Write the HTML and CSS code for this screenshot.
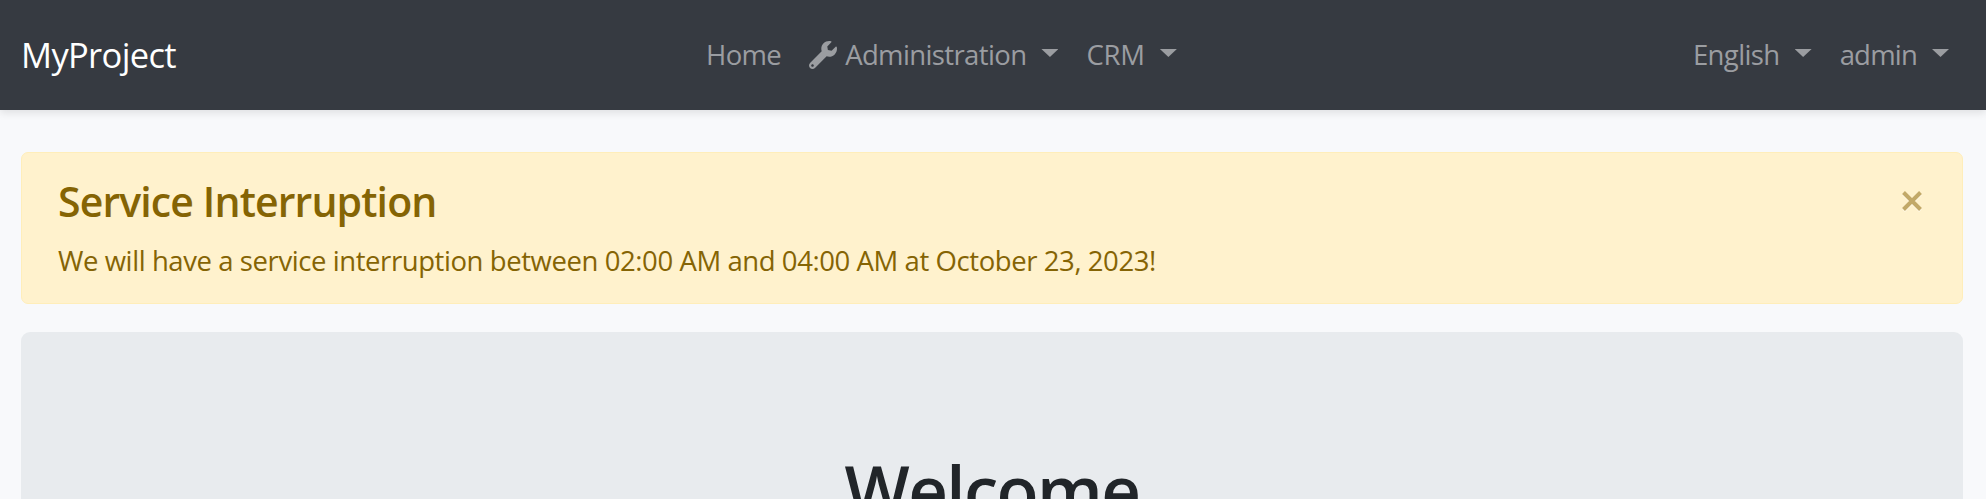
FILE: index.html
```
<!DOCTYPE html>
<html lang="en">
<head>
<meta charset="utf-8">
<title>MyProject</title>
<link rel="stylesheet" href="styles.css">
</head>
<body>
<nav class="navbar">
  <a class="brand">MyProject</a>
  <ul class="nav nav-main">
    <li class="nav-item"><span class="label home">Home</span></li>
    <li class="nav-item">
      <svg class="wrench" viewBox="0 0 512 512" aria-hidden="true"><path fill="currentColor" d="M507.73 109.1c-2.24-9.03-13.54-12.09-20.12-5.51l-74.36 74.36-67.88-11.31-11.31-67.88 74.36-74.36c6.62-6.62 3.43-17.9-5.66-20.16-47.38-11.74-99.55.91-136.58 37.93-39.64 39.64-50.55 97.1-34.05 147.2L18.74 402.76c-24.99 24.99-24.99 65.51 0 90.5 24.99 24.99 65.51 24.99 90.5 0l213.21-213.21c50.12 16.71 107.47 5.68 147.37-34.22 37.07-37.07 49.7-89.32 37.91-136.73zM64 472c-13.25 0-24-10.75-24-24 0-13.26 10.75-24 24-24s24 10.74 24 24c0 13.25-10.75 24-24 24z"/></svg>
      <span class="label administration">Administration</span><span class="caret"></span>
    </li>
    <li class="nav-item"><span class="label crm">CRM</span><span class="caret"></span></li>
  </ul>
  <ul class="nav nav-user">
    <li class="nav-item"><span class="label english">English</span><span class="caret"></span></li>
    <li class="nav-item"><span class="label admin">admin</span><span class="caret"></span></li>
  </ul>
</nav>
<main class="content">
  <section class="alert">
    <div class="alert-body">
      <h4 class="alert-title"><span>Service Interruption</span></h4>
      <p class="alert-text"><span>We will have a service interruption between 02:00 AM and 04:00 AM at October 23, 2023!</span></p>
    </div>
    <svg class="close" viewBox="0 0 20 20" aria-label="Close"><path d="M1.5 2.5 18.5 19.5M18.5 2.5 1.5 19.5" fill="none" stroke="#fff" stroke-opacity=".6" stroke-width="4"/><path d="M1.5 1.5 18.5 18.5M18.5 1.5 1.5 18.5" fill="none" stroke="currentColor" stroke-width="4"/></svg>
  </section>
  <section class="jumbotron"><h1 class="welcome">Welcome</h1></section>
</main>
</body>
</html>
```
FILE: styles.css
```
* { box-sizing: border-box; }
body {
  display: flex;
  flex-direction: column;
  margin: 0;
  height: 499px;
  overflow: hidden;
  background: #f8f9fb;
  color: #212529;
  font: 27.5px/42px "Open Sans", "Noto Sans", sans-serif;
}
.navbar {
  display: grid;
  flex: none;
  grid-template-columns: 685px 1fr auto;
  align-items: center;
  position: relative;
  height: 110px;
  padding: 0 37px 0 21px;
  background: #363a41;
  box-shadow: 0 3px 8px rgba(0, 0, 0, .1);
}
.brand { color: #fff; font-size: 34.5px; letter-spacing: -.65px; }
.nav { display: flex; gap: 28px; margin: 0; padding: 0; list-style: none; color: #9b9da1; }
.nav-item { display: flex; align-items: center; white-space: nowrap; }
.home { letter-spacing: -.65px; }
.administration { letter-spacing: -.62px; }
.crm { letter-spacing: -.2px; }
.english { letter-spacing: -.6px; }
.admin { letter-spacing: -.8px; }
.wrench { width: 28px; height: 28px; margin-right: 8px; }
.caret {
  width: 17px;
  height: 8px;
  margin: -4px 0 0 15px;
  background: currentColor;
  clip-path: polygon(0 0, 100% 0, 50% 100%);
}
.content { flex: 1; min-height: 0; padding: 42px 23px 0 21px; overflow: hidden; }
.alert {
  display: flex;
  justify-content: space-between;
  height: 152px;
  padding: 23px 40px 0 36px;
  border: 1px solid #ffeeba;
  border-radius: 7px;
  background: #fff2cd;
  color: #856404;
}
.alert-title { margin: 0 0 14px; font-size: 41px; line-height: 50px; font-weight: 580; letter-spacing: -.87px; }
.alert-text { margin: 0; letter-spacing: -.42px; }
.close { width: 20px; height: 20px; margin-top: 15px; color: #c2a968; overflow: visible; }
.jumbotron {
  height: 167px;
  margin-top: 28px;
  padding-top: 115px;
  border-radius: 9px 9px 0 0;
  background: #e8ebee;
  text-align: center;
  overflow: hidden;
}
.welcome { margin: 0; font-size: 69px; line-height: 84px; font-weight: 580; letter-spacing: -1.6px; }
```
